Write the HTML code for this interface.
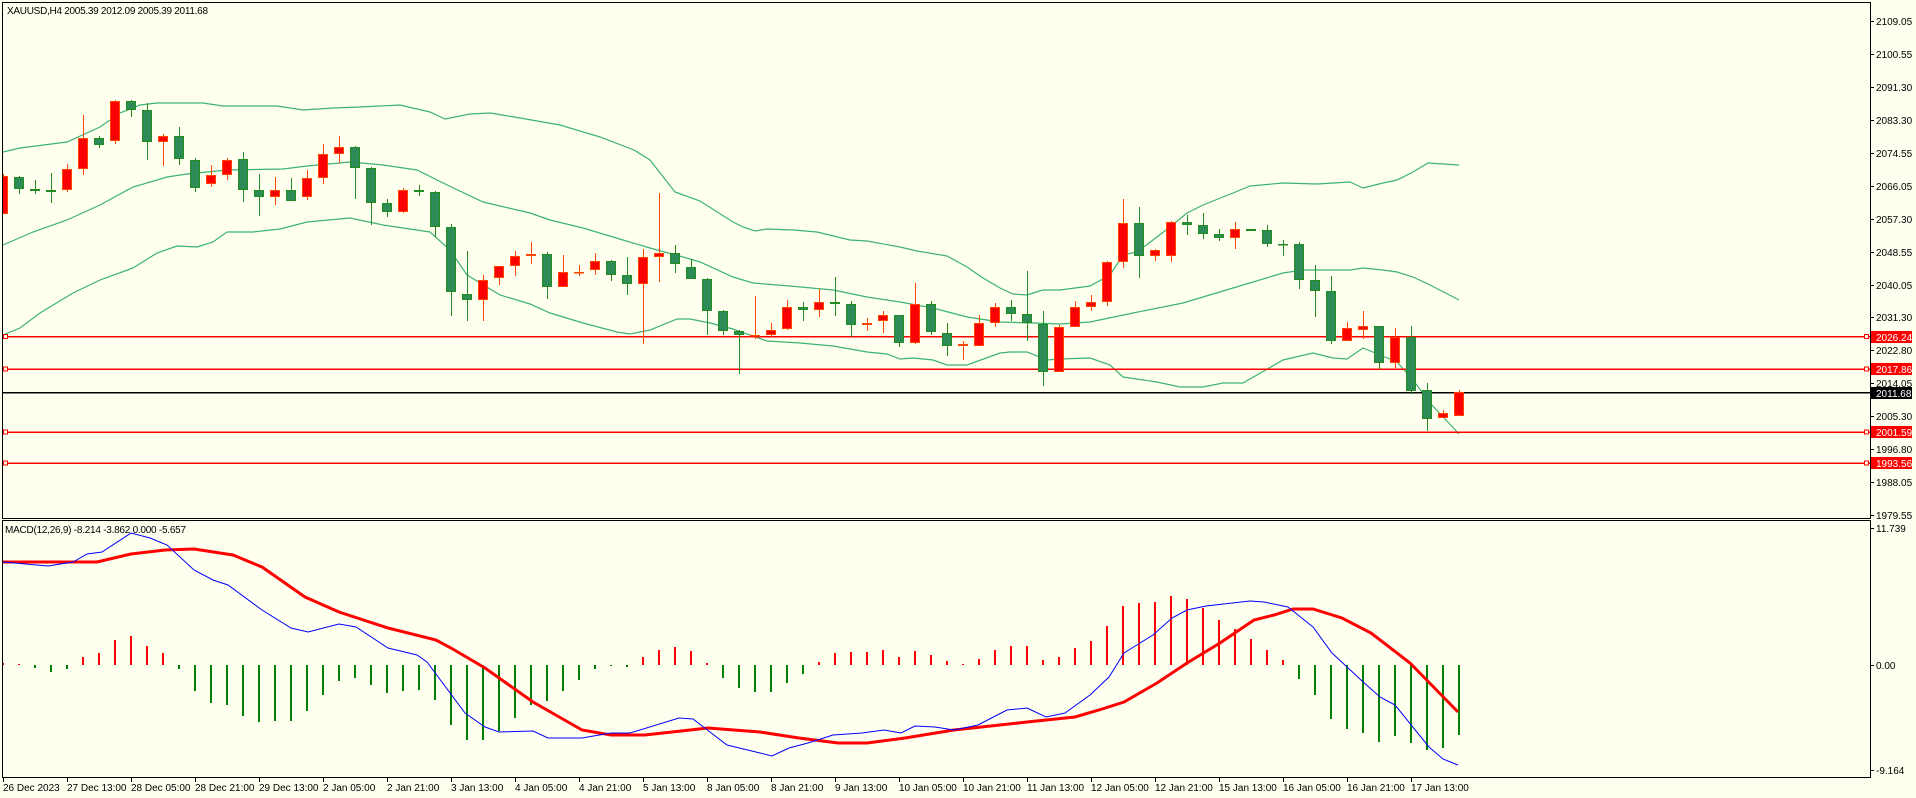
<!DOCTYPE html>
<html><head><meta charset="utf-8"><style>
html,body{margin:0;padding:0;background:#fffff0;}
svg{display:block;font-family:"Liberation Sans",sans-serif;}
.g line{stroke:#228b22}.g rect{fill:#2e8b57;stroke:#228b22}
.r line{stroke:#ff4500}.r rect{fill:#ff0000;stroke:#ff4500}
text{font-size:10px;fill:#000}
</style></head><body>
<svg width="1916" height="798" viewBox="0 0 1916 798" xmlns="http://www.w3.org/2000/svg" shape-rendering="crispEdges">
<defs><clipPath id="cm"><rect x="3" y="3" width="1867" height="515"/></clipPath><clipPath id="cd"><rect x="3" y="522" width="1867" height="255"/></clipPath></defs>
<rect width="1916" height="798" fill="#fffff0"/>
<!-- frames -->
<rect x="2.5" y="2.5" width="1868" height="516" fill="none" stroke="#000"/>
<rect x="2.5" y="520.5" width="1868" height="257" fill="none" stroke="#000"/>
<text x="7" y="14" textLength="201">XAUUSD,H4  2005.39 2012.09 2005.39 2011.68</text>
<g clip-path="url(#cm)">
<g fill="none" stroke="#3cb371" stroke-width="1.2" shape-rendering="auto">
<polyline points="3,152 20,148 67,142 100,127 120,113 140,105 157,103 203,103 223,106 277,106 303,110 333,108 360,107 400,105 430,112 445,119 470,114 490,113 520,118 560,125 600,137 634,150 650,160 675,192 700,201 733,222 743,227 755,231 767,229 793,230 817,232 850,240 867,241 900,247 917,251 947,256 967,267 983,278 1000,288 1013,294 1027,295 1043,290 1060,290 1090,286 1110,275 1123,255 1137,252 1153,240 1170,227 1187,213 1203,205 1233,193 1250,186 1283,183 1317,184 1350,182 1363,188 1383,183 1397,180 1413,172 1428,163 1459,165"/>
<polyline points="3,245 33,232 67,220 100,205 133,187 167,177 187,174 227,170 283,169 307,166 350,162 383,165 417,170 443,183 483,202 530,213 550,220 583,228 623,240 650,248 683,257 700,262 733,277 753,283 790,286 833,290 867,297 900,302 933,308 967,317 1000,322 1033,323 1060,324 1090,322 1133,313 1183,303 1233,288 1283,273 1303,270 1350,270 1363,268 1383,270 1397,272 1413,277 1430,285 1459,300"/>
<polyline points="3,335 20,328 40,313 73,293 100,280 133,268 157,253 177,246 197,247 213,242 227,232 253,232 280,229 307,222 350,218 383,225 430,232 450,250 467,275 500,295 530,304 550,313 583,323 617,332 630,334 650,330 677,319 690,319 710,323 733,329 767,341 800,343 833,346 867,352 887,354 900,359 913,358 933,360 947,365 967,365 1000,353 1010,352 1027,352 1047,360 1060,359 1090,358 1110,365 1123,377 1157,382 1180,387 1203,387 1223,383 1243,383 1283,360 1313,353 1333,358 1347,359 1363,348 1397,362 1413,380 1430,403 1459,434"/>
</g>
<g stroke="#ff0000" stroke-width="1.5">
<line x1="3" y1="336.5" x2="1870" y2="336.5"/><line x1="3" y1="369" x2="1870" y2="369"/>
<line x1="3" y1="432" x2="1870" y2="432"/><line x1="3" y1="463" x2="1870" y2="463"/>
</g>
<line x1="3" y1="392.5" x2="1870" y2="392.5" stroke="#000" stroke-width="1.5"/>
<g fill="#fffff0" stroke="#ff0000">
<rect x="3.5" y="334.5" width="4" height="4"/><rect x="3.5" y="367" width="4" height="4"/><rect x="3.5" y="430" width="4" height="4"/><rect x="3.5" y="461" width="4" height="4"/>
<rect x="1864.5" y="334.5" width="4" height="4"/><rect x="1864.5" y="367" width="4" height="4"/><rect x="1864.5" y="430" width="4" height="4"/><rect x="1864.5" y="461" width="4" height="4"/>
</g>
<g class="r"><line x1="3.5" y1="174" x2="3.5" y2="214"/><rect x="-1.5" y="176.5" width="9" height="37"/></g>
<g class="g"><line x1="19.5" y1="176" x2="19.5" y2="194"/><rect x="14.5" y="177.5" width="9" height="11"/></g>
<g class="g"><line x1="35.5" y1="180" x2="35.5" y2="194"/><rect x="30.5" y="189.5" width="9" height="1"/></g>
<g class="g"><line x1="51.5" y1="173" x2="51.5" y2="203"/><rect x="46.5" y="190.5" width="9" height="1"/></g>
<g class="r"><line x1="67.5" y1="164" x2="67.5" y2="192"/><rect x="62.5" y="169.5" width="9" height="20"/></g>
<g class="r"><line x1="83.5" y1="115" x2="83.5" y2="175"/><rect x="78.5" y="138.5" width="9" height="30"/></g>
<g class="g"><line x1="99.5" y1="136" x2="99.5" y2="148"/><rect x="94.5" y="138.5" width="9" height="6"/></g>
<g class="r"><line x1="115.5" y1="100" x2="115.5" y2="144"/><rect x="110.5" y="101.5" width="9" height="39"/></g>
<g class="g"><line x1="131.5" y1="100" x2="131.5" y2="117"/><rect x="126.5" y="101.5" width="9" height="8"/></g>
<g class="g"><line x1="147.5" y1="103" x2="147.5" y2="160"/><rect x="142.5" y="110.5" width="9" height="31"/></g>
<g class="r"><line x1="163.5" y1="134" x2="163.5" y2="166"/><rect x="158.5" y="136.5" width="9" height="5"/></g>
<g class="g"><line x1="179.5" y1="127" x2="179.5" y2="165"/><rect x="174.5" y="136.5" width="9" height="22"/></g>
<g class="g"><line x1="195.5" y1="158" x2="195.5" y2="192"/><rect x="190.5" y="160.5" width="9" height="27"/></g>
<g class="r"><line x1="211.5" y1="165" x2="211.5" y2="187"/><rect x="206.5" y="175.5" width="9" height="8"/></g>
<g class="r"><line x1="227.5" y1="158" x2="227.5" y2="180"/><rect x="222.5" y="160.5" width="9" height="14"/></g>
<g class="g"><line x1="243.5" y1="152" x2="243.5" y2="202"/><rect x="238.5" y="159.5" width="9" height="30"/></g>
<g class="g"><line x1="259.5" y1="174" x2="259.5" y2="216"/><rect x="254.5" y="190.5" width="9" height="6"/></g>
<g class="r"><line x1="275.5" y1="177" x2="275.5" y2="205"/><rect x="270.5" y="190.5" width="9" height="6"/></g>
<g class="g"><line x1="291.5" y1="178" x2="291.5" y2="201"/><rect x="286.5" y="190.5" width="9" height="10"/></g>
<g class="r"><line x1="307.5" y1="170" x2="307.5" y2="200"/><rect x="302.5" y="178.5" width="9" height="18"/></g>
<g class="r"><line x1="323.5" y1="144" x2="323.5" y2="184"/><rect x="318.5" y="154.5" width="9" height="23"/></g>
<g class="r"><line x1="339.5" y1="136" x2="339.5" y2="163"/><rect x="334.5" y="147.5" width="9" height="6"/></g>
<g class="g"><line x1="355.5" y1="146" x2="355.5" y2="199"/><rect x="350.5" y="147.5" width="9" height="20"/></g>
<g class="g"><line x1="371.5" y1="167" x2="371.5" y2="225"/><rect x="366.5" y="168.5" width="9" height="34"/></g>
<g class="g"><line x1="387.5" y1="199" x2="387.5" y2="217"/><rect x="382.5" y="203.5" width="9" height="8"/></g>
<g class="r"><line x1="403.5" y1="188" x2="403.5" y2="213"/><rect x="398.5" y="190.5" width="9" height="21"/></g>
<g class="g"><line x1="419.5" y1="185" x2="419.5" y2="196"/><rect x="414.5" y="190.5" width="9" height="1"/></g>
<g class="g"><line x1="435.5" y1="191" x2="435.5" y2="237"/><rect x="430.5" y="192.5" width="9" height="34"/></g>
<g class="g"><line x1="451.5" y1="224" x2="451.5" y2="316"/><rect x="446.5" y="227.5" width="9" height="64"/></g>
<g class="g"><line x1="467.5" y1="251" x2="467.5" y2="321"/><rect x="462.5" y="294.5" width="9" height="5"/></g>
<g class="r"><line x1="483.5" y1="275" x2="483.5" y2="321"/><rect x="478.5" y="280.5" width="9" height="19"/></g>
<g class="r"><line x1="499.5" y1="266" x2="499.5" y2="285"/><rect x="494.5" y="266.5" width="9" height="11"/></g>
<g class="r"><line x1="515.5" y1="251" x2="515.5" y2="276"/><rect x="510.5" y="256.5" width="9" height="9"/></g>
<g class="r"><line x1="531.5" y1="242" x2="531.5" y2="264"/><rect x="526.5" y="254.5" width="9" height="1"/></g>
<g class="g"><line x1="547.5" y1="252" x2="547.5" y2="299"/><rect x="542.5" y="254.5" width="9" height="32"/></g>
<g class="r"><line x1="563.5" y1="255" x2="563.5" y2="287"/><rect x="558.5" y="272.5" width="9" height="14"/></g>
<g class="r"><line x1="579.5" y1="265" x2="579.5" y2="276"/><rect x="574.5" y="272.5" width="9" height="0.5"/></g>
<g class="r"><line x1="595.5" y1="253" x2="595.5" y2="275"/><rect x="590.5" y="261.5" width="9" height="8"/></g>
<g class="g"><line x1="611.5" y1="260" x2="611.5" y2="281"/><rect x="606.5" y="261.5" width="9" height="13"/></g>
<g class="g"><line x1="627.5" y1="257" x2="627.5" y2="295"/><rect x="622.5" y="275.5" width="9" height="8"/></g>
<g class="r"><line x1="643.5" y1="249" x2="643.5" y2="344"/><rect x="638.5" y="257.5" width="9" height="26"/></g>
<g class="r"><line x1="659.5" y1="193" x2="659.5" y2="282"/><rect x="654.5" y="253.5" width="9" height="3"/></g>
<g class="g"><line x1="675.5" y1="245" x2="675.5" y2="273"/><rect x="670.5" y="253.5" width="9" height="10"/></g>
<g class="g"><line x1="691.5" y1="259" x2="691.5" y2="279"/><rect x="686.5" y="267.5" width="9" height="11"/></g>
<g class="g"><line x1="707.5" y1="278" x2="707.5" y2="335"/><rect x="702.5" y="279.5" width="9" height="31"/></g>
<g class="g"><line x1="723.5" y1="310" x2="723.5" y2="335"/><rect x="718.5" y="311.5" width="9" height="19"/></g>
<g class="g"><line x1="739.5" y1="330" x2="739.5" y2="374"/><rect x="734.5" y="331.5" width="9" height="3"/></g>
<g class="r"><line x1="755.5" y1="296" x2="755.5" y2="339"/><rect x="750.5" y="335.5" width="9" height="0.5"/></g>
<g class="r"><line x1="771.5" y1="323" x2="771.5" y2="337"/><rect x="766.5" y="330.5" width="9" height="4"/></g>
<g class="r"><line x1="787.5" y1="300" x2="787.5" y2="330"/><rect x="782.5" y="307.5" width="9" height="21"/></g>
<g class="g"><line x1="803.5" y1="302" x2="803.5" y2="321"/><rect x="798.5" y="307.5" width="9" height="2"/></g>
<g class="r"><line x1="819.5" y1="289" x2="819.5" y2="317"/><rect x="814.5" y="302.5" width="9" height="7"/></g>
<g class="g"><line x1="835.5" y1="277" x2="835.5" y2="316"/><rect x="830.5" y="302.5" width="9" height="1"/></g>
<g class="g"><line x1="851.5" y1="301" x2="851.5" y2="337"/><rect x="846.5" y="304.5" width="9" height="20"/></g>
<g class="r"><line x1="867.5" y1="318" x2="867.5" y2="331"/><rect x="862.5" y="323.5" width="9" height="1"/></g>
<g class="r"><line x1="883.5" y1="311" x2="883.5" y2="333"/><rect x="878.5" y="315.5" width="9" height="5"/></g>
<g class="g"><line x1="899.5" y1="315" x2="899.5" y2="347"/><rect x="894.5" y="315.5" width="9" height="27"/></g>
<g class="r"><line x1="915.5" y1="283" x2="915.5" y2="344"/><rect x="910.5" y="304.5" width="9" height="38"/></g>
<g class="g"><line x1="931.5" y1="301" x2="931.5" y2="335"/><rect x="926.5" y="304.5" width="9" height="27"/></g>
<g class="g"><line x1="947.5" y1="323" x2="947.5" y2="356"/><rect x="942.5" y="333.5" width="9" height="12"/></g>
<g class="r"><line x1="963.5" y1="341" x2="963.5" y2="360"/><rect x="958.5" y="344.5" width="9" height="1"/></g>
<g class="r"><line x1="979.5" y1="315" x2="979.5" y2="346"/><rect x="974.5" y="323.5" width="9" height="22"/></g>
<g class="r"><line x1="995.5" y1="303" x2="995.5" y2="327"/><rect x="990.5" y="307.5" width="9" height="15"/></g>
<g class="g"><line x1="1011.5" y1="300" x2="1011.5" y2="321"/><rect x="1006.5" y="307.5" width="9" height="6"/></g>
<g class="g"><line x1="1027.5" y1="271" x2="1027.5" y2="341"/><rect x="1022.5" y="314.5" width="9" height="8"/></g>
<g class="g"><line x1="1043.5" y1="311" x2="1043.5" y2="386"/><rect x="1038.5" y="324.5" width="9" height="47"/></g>
<g class="r"><line x1="1059.5" y1="325" x2="1059.5" y2="372"/><rect x="1054.5" y="327.5" width="9" height="44"/></g>
<g class="r"><line x1="1075.5" y1="301" x2="1075.5" y2="327"/><rect x="1070.5" y="307.5" width="9" height="19"/></g>
<g class="r"><line x1="1091.5" y1="295" x2="1091.5" y2="311"/><rect x="1086.5" y="302.5" width="9" height="4"/></g>
<g class="r"><line x1="1107.5" y1="261" x2="1107.5" y2="306"/><rect x="1102.5" y="262.5" width="9" height="39"/></g>
<g class="r"><line x1="1123.5" y1="199" x2="1123.5" y2="268"/><rect x="1118.5" y="223.5" width="9" height="38"/></g>
<g class="g"><line x1="1139.5" y1="207" x2="1139.5" y2="278"/><rect x="1134.5" y="223.5" width="9" height="32"/></g>
<g class="r"><line x1="1155.5" y1="249" x2="1155.5" y2="261"/><rect x="1150.5" y="250.5" width="9" height="5"/></g>
<g class="r"><line x1="1171.5" y1="221" x2="1171.5" y2="262"/><rect x="1166.5" y="222.5" width="9" height="33"/></g>
<g class="g"><line x1="1187.5" y1="215" x2="1187.5" y2="235"/><rect x="1182.5" y="222.5" width="9" height="2"/></g>
<g class="g"><line x1="1203.5" y1="213" x2="1203.5" y2="239"/><rect x="1198.5" y="225.5" width="9" height="8"/></g>
<g class="g"><line x1="1219.5" y1="229" x2="1219.5" y2="241"/><rect x="1214.5" y="234.5" width="9" height="3"/></g>
<g class="r"><line x1="1235.5" y1="222" x2="1235.5" y2="249"/><rect x="1230.5" y="229.5" width="9" height="8"/></g>
<g class="g"><line x1="1251.5" y1="229" x2="1251.5" y2="231"/><rect x="1246.5" y="229.5" width="9" height="1"/></g>
<g class="g"><line x1="1267.5" y1="225" x2="1267.5" y2="247"/><rect x="1262.5" y="230.5" width="9" height="13"/></g>
<g class="g"><line x1="1283.5" y1="240" x2="1283.5" y2="256"/><rect x="1278.5" y="244.5" width="9" height="0.5"/></g>
<g class="g"><line x1="1299.5" y1="242" x2="1299.5" y2="289"/><rect x="1294.5" y="244.5" width="9" height="35"/></g>
<g class="g"><line x1="1315.5" y1="265" x2="1315.5" y2="317"/><rect x="1310.5" y="280.5" width="9" height="10"/></g>
<g class="g"><line x1="1331.5" y1="276" x2="1331.5" y2="344"/><rect x="1326.5" y="291.5" width="9" height="49"/></g>
<g class="r"><line x1="1347.5" y1="322" x2="1347.5" y2="341"/><rect x="1342.5" y="328.5" width="9" height="12"/></g>
<g class="r"><line x1="1363.5" y1="311" x2="1363.5" y2="339"/><rect x="1358.5" y="326.5" width="9" height="3"/></g>
<g class="g"><line x1="1379.5" y1="326" x2="1379.5" y2="369"/><rect x="1374.5" y="326.5" width="9" height="36"/></g>
<g class="r"><line x1="1395.5" y1="328" x2="1395.5" y2="368"/><rect x="1390.5" y="337.5" width="9" height="25"/></g>
<g class="g"><line x1="1411.5" y1="326" x2="1411.5" y2="394"/><rect x="1406.5" y="337.5" width="9" height="53"/></g>
<g class="g"><line x1="1427.5" y1="383" x2="1427.5" y2="431"/><rect x="1422.5" y="390.5" width="9" height="28"/></g>
<g class="r"><line x1="1443.5" y1="410" x2="1443.5" y2="418"/><rect x="1438.5" y="413.5" width="9" height="4"/></g>
<g class="r"><line x1="1459.5" y1="390" x2="1459.5" y2="416"/><rect x="1454.5" y="392.5" width="9" height="23"/></g>
</g>
<!-- price axis -->
<g stroke="#000">
<line x1="1870" y1="21.5" x2="1874" y2="21.5"/><line x1="1870" y1="54.5" x2="1874" y2="54.5"/><line x1="1870" y1="87.5" x2="1874" y2="87.5"/><line x1="1870" y1="120.5" x2="1874" y2="120.5"/><line x1="1870" y1="153.5" x2="1874" y2="153.5"/><line x1="1870" y1="186.5" x2="1874" y2="186.5"/><line x1="1870" y1="219.5" x2="1874" y2="219.5"/><line x1="1870" y1="252.5" x2="1874" y2="252.5"/><line x1="1870" y1="285.5" x2="1874" y2="285.5"/><line x1="1870" y1="317.5" x2="1874" y2="317.5"/><line x1="1870" y1="350.5" x2="1874" y2="350.5"/><line x1="1870" y1="383.5" x2="1874" y2="383.5"/><line x1="1870" y1="416.5" x2="1874" y2="416.5"/><line x1="1870" y1="449.5" x2="1874" y2="449.5"/><line x1="1870" y1="482.5" x2="1874" y2="482.5"/><line x1="1870" y1="515.5" x2="1874" y2="515.5"/>
</g>
<g>
<text x="1876" y="25">2109.05</text><text x="1876" y="58">2100.55</text><text x="1876" y="91">2091.30</text><text x="1876" y="124">2083.30</text><text x="1876" y="157">2074.55</text><text x="1876" y="190">2066.05</text><text x="1876" y="223">2057.30</text><text x="1876" y="256">2048.55</text><text x="1876" y="289">2040.05</text><text x="1876" y="321">2031.30</text><text x="1876" y="354">2022.80</text><text x="1876" y="387">2014.05</text><text x="1876" y="420">2005.30</text><text x="1876" y="453">1996.80</text><text x="1876" y="486">1988.05</text><text x="1876" y="519">1979.55</text>
</g>
<g fill="#ff0000"><rect x="1871" y="331" width="41" height="12"/><rect x="1871" y="363" width="41" height="12"/><rect x="1871" y="426" width="41" height="12"/><rect x="1871" y="457" width="41" height="12"/></g>
<rect x="1871" y="387" width="41" height="12" fill="#000"/>
<g style="fill:#fff"><text x="1876" y="341" style="fill:#fff">2026.24</text><text x="1876" y="373" style="fill:#fff">2017.86</text><text x="1876" y="397" style="fill:#fff">2011.68</text><text x="1876" y="436" style="fill:#fff">2001.59</text><text x="1876" y="467" style="fill:#fff">1993.56</text></g>
<!-- MACD -->
<text x="5" y="533" textLength="181">MACD(12,26,9) -8.214 -3.862 0.000 -5.657</text>
<g clip-path="url(#cd)" stroke-width="2">
<g stroke="#ff0000">
<line x1="3" y1="663" x2="3" y2="665"/><line x1="19" y1="664" x2="19" y2="665"/><line x1="83" y1="657" x2="83" y2="665"/><line x1="99" y1="653" x2="99" y2="665"/><line x1="115" y1="640" x2="115" y2="665"/><line x1="131" y1="636" x2="131" y2="665"/><line x1="147" y1="646" x2="147" y2="665"/><line x1="163" y1="653" x2="163" y2="665"/>
<line x1="643" y1="657" x2="643" y2="665"/><line x1="659" y1="650" x2="659" y2="665"/><line x1="675" y1="647" x2="675" y2="665"/><line x1="691" y1="651" x2="691" y2="665"/><line x1="707" y1="663" x2="707" y2="665"/>
<line x1="819" y1="662" x2="819" y2="665"/><line x1="835" y1="653" x2="835" y2="665"/><line x1="851" y1="652" x2="851" y2="665"/><line x1="867" y1="652" x2="867" y2="665"/><line x1="883" y1="650" x2="883" y2="665"/><line x1="899" y1="657" x2="899" y2="665"/><line x1="915" y1="651" x2="915" y2="665"/><line x1="931" y1="655" x2="931" y2="665"/><line x1="947" y1="661" x2="947" y2="665"/><line x1="963" y1="664" x2="963" y2="665"/><line x1="979" y1="659" x2="979" y2="665"/><line x1="995" y1="650" x2="995" y2="665"/><line x1="1011" y1="646" x2="1011" y2="665"/><line x1="1027" y1="646" x2="1027" y2="665"/><line x1="1043" y1="660" x2="1043" y2="665"/><line x1="1059" y1="657" x2="1059" y2="665"/><line x1="1075" y1="648" x2="1075" y2="665"/><line x1="1091" y1="641" x2="1091" y2="665"/><line x1="1107" y1="626" x2="1107" y2="665"/><line x1="1123" y1="606" x2="1123" y2="665"/><line x1="1139" y1="603" x2="1139" y2="665"/><line x1="1155" y1="602" x2="1155" y2="665"/><line x1="1171" y1="596" x2="1171" y2="665"/><line x1="1187" y1="599" x2="1187" y2="665"/><line x1="1203" y1="608" x2="1203" y2="665"/><line x1="1219" y1="620" x2="1219" y2="665"/><line x1="1235" y1="629" x2="1235" y2="665"/><line x1="1251" y1="639" x2="1251" y2="665"/><line x1="1267" y1="650" x2="1267" y2="665"/><line x1="1283" y1="660" x2="1283" y2="665"/>
</g>
<g stroke="#008000">
<line x1="35" y1="665" x2="35" y2="668"/><line x1="51" y1="665" x2="51" y2="672"/><line x1="67" y1="665" x2="67" y2="669"/>
<line x1="179" y1="665" x2="179" y2="669"/><line x1="195" y1="665" x2="195" y2="691"/><line x1="211" y1="665" x2="211" y2="703"/><line x1="227" y1="665" x2="227" y2="705"/><line x1="243" y1="665" x2="243" y2="716"/><line x1="259" y1="665" x2="259" y2="722"/><line x1="275" y1="665" x2="275" y2="721"/><line x1="291" y1="665" x2="291" y2="721"/><line x1="307" y1="665" x2="307" y2="711"/><line x1="323" y1="665" x2="323" y2="695"/><line x1="339" y1="665" x2="339" y2="681"/><line x1="355" y1="665" x2="355" y2="678"/><line x1="371" y1="665" x2="371" y2="685"/><line x1="387" y1="665" x2="387" y2="693"/><line x1="403" y1="665" x2="403" y2="691"/><line x1="419" y1="665" x2="419" y2="690"/><line x1="435" y1="665" x2="435" y2="700"/><line x1="451" y1="665" x2="451" y2="725"/><line x1="467" y1="665" x2="467" y2="740"/><line x1="483" y1="665" x2="483" y2="740"/><line x1="499" y1="665" x2="499" y2="731"/><line x1="515" y1="665" x2="515" y2="718"/><line x1="531" y1="665" x2="531" y2="705"/><line x1="547" y1="665" x2="547" y2="701"/><line x1="563" y1="665" x2="563" y2="691"/><line x1="579" y1="665" x2="579" y2="680"/><line x1="595" y1="665" x2="595" y2="669"/><line x1="611" y1="665" x2="611" y2="666"/><line x1="627" y1="665" x2="627" y2="667"/>
<line x1="723" y1="665" x2="723" y2="678"/><line x1="739" y1="665" x2="739" y2="688"/><line x1="755" y1="665" x2="755" y2="692"/><line x1="771" y1="665" x2="771" y2="692"/><line x1="787" y1="665" x2="787" y2="683"/><line x1="803" y1="665" x2="803" y2="674"/>
<line x1="1299" y1="665" x2="1299" y2="679"/><line x1="1315" y1="665" x2="1315" y2="695"/><line x1="1331" y1="665" x2="1331" y2="719"/><line x1="1347" y1="665" x2="1347" y2="729"/><line x1="1363" y1="665" x2="1363" y2="733"/><line x1="1379" y1="665" x2="1379" y2="742"/><line x1="1395" y1="665" x2="1395" y2="736"/><line x1="1411" y1="665" x2="1411" y2="743"/><line x1="1427" y1="665" x2="1427" y2="750"/><line x1="1443" y1="665" x2="1443" y2="748"/><line x1="1459" y1="665" x2="1459" y2="735"/>
</g>
<g fill="none" shape-rendering="auto">
<polyline stroke="#ff0000" stroke-width="3" points="3,562 97,562 131,554 165,550 194,549 233,555 262,567 305,597 339,612 388,628 436,640 451,648 485,668 533,702 582,730 611,735 645,735 708,728 760,732 799,738 838,743 867,743 905,738 954,730 1027,722 1075,717 1099,710 1124,702 1157,683 1187,663 1220,643 1254,620 1274,615 1293,609 1313,609 1342,618 1371,633 1410,663 1458,712"/>
<polyline stroke="#0000ff" stroke-width="1" points="3,562 48,566 73,562 87,554 102,552 131,533 150,538 167,545 194,570 213,580 228,585 262,610 291,628 308,632 339,624 356,627 388,648 417,655 427,662 465,713 485,727 499,732 533,731 548,738 582,738 611,733 630,733 679,718 693,719 727,745 760,753 772,756 789,748 808,743 833,735 862,733 884,730 901,733 915,726 935,727 954,730 978,725 1007,710 1027,708 1046,717 1065,713 1090,695 1109,677 1124,653 1153,635 1172,618 1187,610 1206,606 1250,601 1264,602 1288,607 1313,627 1332,653 1361,680 1380,697 1395,705 1429,747 1443,759 1458,765"/>
</g>
</g>
<g stroke="#000"><line x1="1870" y1="528.5" x2="1874" y2="528.5"/><line x1="1870" y1="665.5" x2="1874" y2="665.5"/><line x1="1870" y1="770.5" x2="1874" y2="770.5"/></g>
<text x="1876" y="532">11.739</text><text x="1876" y="669">0.00</text><text x="1876" y="774">-9.164</text>
<!-- time axis -->
<g stroke="#000">
<line x1="3.5" y1="777" x2="3.5" y2="782"/><line x1="67.5" y1="777" x2="67.5" y2="782"/><line x1="131.5" y1="777" x2="131.5" y2="782"/><line x1="195.5" y1="777" x2="195.5" y2="782"/><line x1="259.5" y1="777" x2="259.5" y2="782"/><line x1="323.5" y1="777" x2="323.5" y2="782"/><line x1="387.5" y1="777" x2="387.5" y2="782"/><line x1="451.5" y1="777" x2="451.5" y2="782"/><line x1="515.5" y1="777" x2="515.5" y2="782"/><line x1="579.5" y1="777" x2="579.5" y2="782"/><line x1="643.5" y1="777" x2="643.5" y2="782"/><line x1="707.5" y1="777" x2="707.5" y2="782"/><line x1="771.5" y1="777" x2="771.5" y2="782"/><line x1="835.5" y1="777" x2="835.5" y2="782"/><line x1="899.5" y1="777" x2="899.5" y2="782"/><line x1="963.5" y1="777" x2="963.5" y2="782"/><line x1="1027.5" y1="777" x2="1027.5" y2="782"/><line x1="1091.5" y1="777" x2="1091.5" y2="782"/><line x1="1155.5" y1="777" x2="1155.5" y2="782"/><line x1="1219.5" y1="777" x2="1219.5" y2="782"/><line x1="1283.5" y1="777" x2="1283.5" y2="782"/><line x1="1347.5" y1="777" x2="1347.5" y2="782"/><line x1="1411.5" y1="777" x2="1411.5" y2="782"/>
</g>
<g style="font-size:9.5px">
<text x="3" y="791">26 Dec 2023</text><text x="67" y="791">27 Dec 13:00</text><text x="131" y="791">28 Dec 05:00</text><text x="195" y="791">28 Dec 21:00</text><text x="259" y="791">29 Dec 13:00</text><text x="323" y="791">2 Jan 05:00</text><text x="387" y="791">2 Jan 21:00</text><text x="451" y="791">3 Jan 13:00</text><text x="515" y="791">4 Jan 05:00</text><text x="579" y="791">4 Jan 21:00</text><text x="643" y="791">5 Jan 13:00</text><text x="707" y="791">8 Jan 05:00</text><text x="771" y="791">8 Jan 21:00</text><text x="835" y="791">9 Jan 13:00</text><text x="899" y="791">10 Jan 05:00</text><text x="963" y="791">10 Jan 21:00</text><text x="1027" y="791">11 Jan 13:00</text><text x="1091" y="791">12 Jan 05:00</text><text x="1155" y="791">12 Jan 21:00</text><text x="1219" y="791">15 Jan 13:00</text><text x="1283" y="791">16 Jan 05:00</text><text x="1347" y="791">16 Jan 21:00</text><text x="1411" y="791">17 Jan 13:00</text>
</g>
</svg>
</body></html>
